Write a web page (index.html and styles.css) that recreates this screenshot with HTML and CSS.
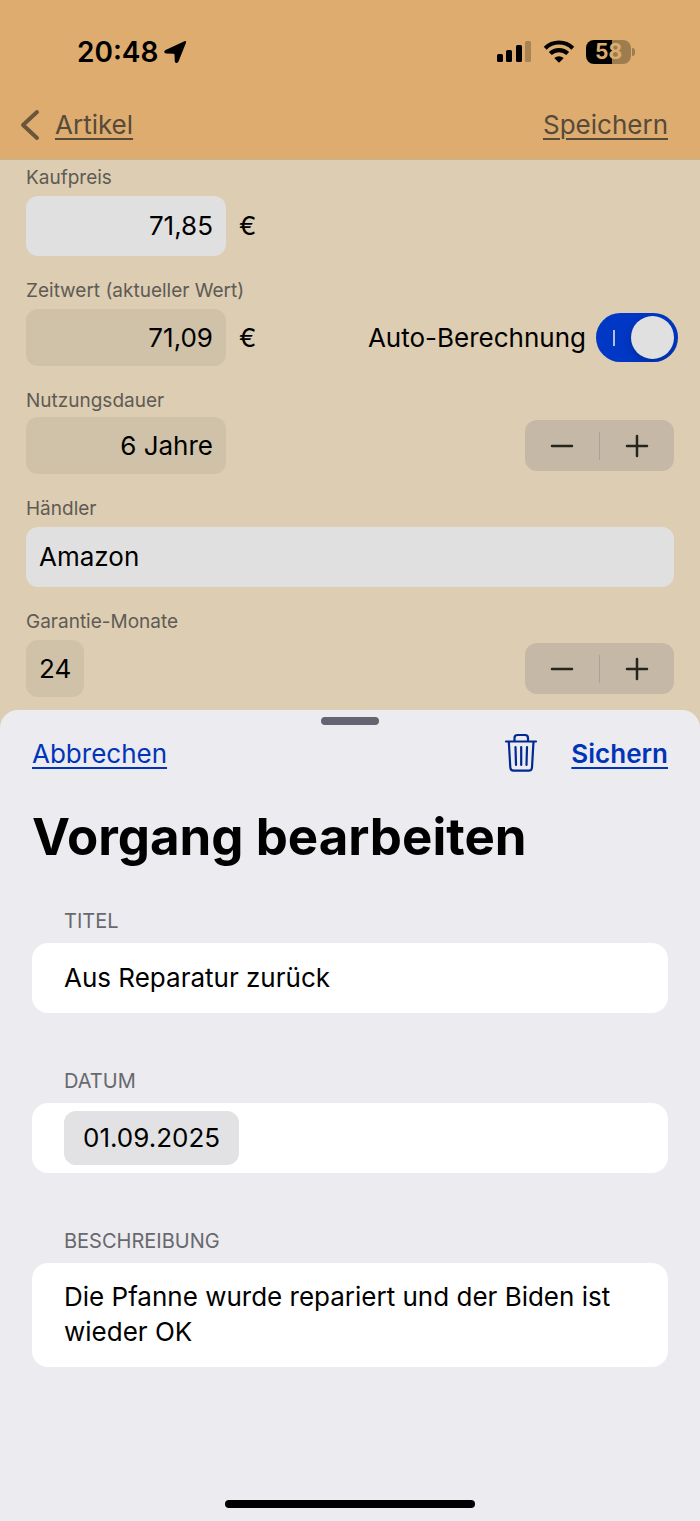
FILE: index.html
```html
<!DOCTYPE html>
<html lang="de">
<head>
<meta charset="utf-8">
<meta name="viewport" content="width=device-width, initial-scale=1">
<title>Vorgang bearbeiten</title>
<link rel="stylesheet" href="styles.css">
</head>
<body>
<div class="screen">
  <header class="header">
    <div class="status">
      <div class="status-time">
        <span>20:48</span>
        <svg width="24" height="24" viewBox="0 0 24 24" aria-hidden="true"><path d="M22 2.800 14.500 21.600Q13.800 23.200 12.400 23Q10.900 22.800 10.800 21.400L10.500 14.800Q10.500 13.800 9.500 13.800L2.200 13.500Q.5 13.400.2 12Q0 10.600 1.600 9.900L20.400 1.200Q22.800.5 22 2.800Z"/></svg>
      </div>
      <div class="status-icons">
        <svg width="36" height="24" viewBox="0 0 36 24" aria-hidden="true"><rect x="1" y="14" width="6" height="8" rx="1.500"/><rect x="10" y="10" width="6" height="12" rx="1.500"/><rect x="20" y="5" width="6" height="17" rx="1.500"/><rect x="29" y="1" width="6" height="21" rx="1.500" opacity=".24"/></svg>
        <svg width="32" height="24" viewBox="0 0 32 24" aria-hidden="true"><g fill="none" stroke="#000" stroke-width="4.200"><path d="M2.200 8.200a19.600 19.600 0 0 1 27.600 0"/><path d="M7.300 13.600a12.500 12.500 0 0 1 17.400 0"/></g><path d="M11.300 18a7 7 0 0 1 9.400 0L16.600 22.200q-.6.600-1.200 0Z"/></svg>
        <div class="battery"><span class="battery-level">58</span><span class="battery-cap"></span></div>
      </div>
    </div>
    <nav class="nav">
      <a class="back" href="#">
        <svg width="20" height="32" viewBox="0 0 20 32" fill="none" stroke="currentColor" stroke-width="4" stroke-linecap="round" stroke-linejoin="round" aria-hidden="true"><path d="M17 3 3 16l14 13"/></svg>
        <span class="link">Artikel</span>
      </a>
      <a class="link" href="#">Speichern</a>
    </nav>
  </header>

  <form class="article">
    <div class="field">
      <label class="label" for="price">Kaufpreis</label>
      <div class="row"><input class="box box-edit amount" id="price" type="text" value="71,85"><span class="unit">€</span></div>
    </div>
    <div class="field">
      <label class="label" for="value">Zeitwert (aktueller Wert)</label>
      <div class="row">
        <output class="box amount" id="value">71,09</output><span class="unit">€</span>
        <label class="auto">Auto-Berechnung <input class="switch" type="checkbox" role="switch" checked></label>
      </div>
    </div>
    <div class="field field-tight">
      <label class="label" for="years">Nutzungsdauer</label>
      <div class="row">
        <output class="box amount" id="years">6 Jahre</output>
        <div class="stepper">
          <button type="button" aria-label="Weniger Jahre"><svg width="24" height="24" viewBox="0 0 24 24"><path d="M2 12h20"/></svg></button>
          <button type="button" aria-label="Mehr Jahre"><svg width="24" height="24" viewBox="0 0 24 24"><path d="M2 12h20M12 2v20"/></svg></button>
        </div>
      </div>
    </div>
    <div class="field">
      <label class="label" for="dealer">Händler</label>
      <input class="box box-edit" id="dealer" type="text" value="Amazon">
    </div>
    <div class="field">
      <label class="label" for="months">Garantie-Monate</label>
      <div class="row">
        <output class="box" id="months">24</output>
        <div class="stepper">
          <button type="button" aria-label="Weniger Monate"><svg width="24" height="24" viewBox="0 0 24 24"><path d="M2 12h20"/></svg></button>
          <button type="button" aria-label="Mehr Monate"><svg width="24" height="24" viewBox="0 0 24 24"><path d="M2 12h20M12 2v20"/></svg></button>
        </div>
      </div>
    </div>
  </form>

  <form class="sheet">
    <div class="grabber"></div>
    <div class="sheet-nav">
      <button class="action" type="button">Abbrechen</button>
      <div class="sheet-actions">
        <button class="trash" type="button" aria-label="Löschen"><svg width="34" height="40" viewBox="0 0 34 40" fill="none" stroke="currentColor" stroke-width="2.200" stroke-linecap="round" stroke-linejoin="round"><path d="M2 8.500h30M10.500 8.500V5q0-3 3-3h7.500q3 0 3 3v3.500M4.800 8.500 6.300 34.500q.2 3.200 3.400 3.200h14.900q3.200 0 3.400-3.200L29.500 8.500M11.500 14l.5 18M17.200 14v18M23 14l-.5 18"/></svg></button>
        <button class="action action-strong" type="submit">Sichern</button>
      </div>
    </div>
    <h1 class="title">Vorgang bearbeiten</h1>
    <div class="groups">
      <div class="group">
        <label class="caption" for="title">TITEL</label>
        <input class="cell cell-text" id="title" type="text" value="Aus Reparatur zurück">
      </div>
      <div class="group">
        <label class="caption" for="date">DATUM</label>
        <div class="cell cell-date"><button class="date" id="date" type="button">01.09.2025</button></div>
      </div>
      <div class="group">
        <label class="caption" for="text">BESCHREIBUNG</label>
        <textarea class="cell cell-area" id="text" rows="2">Die Pfanne wurde repariert und der Biden ist wieder OK</textarea>
      </div>
    </div>
    <div class="home"></div>
  </form>
</div>
</body>
</html>
```

FILE: styles.css
```css
* { box-sizing: border-box; }

body {
  margin: 0;
  color: #000;
  font-family: Inter, "Liberation Sans", sans-serif;
  font-size: 26px;
  line-height: 32px;
}

input, button, textarea {
  margin: 0;
  border: 0;
  padding: 0;
  background: none;
  color: inherit;
  font: inherit;
}

svg { display: block; flex: none; }

.screen {
  display: flex;
  flex-direction: column;
  min-height: 100vh;
  background: #dccdb3;
}

.header {
  background: #ddac6e;
  border-bottom: 1px solid #c4b294;
  padding-top: 36px;
}

.status {
  display: flex;
  justify-content: space-between;
  align-items: center;
  padding: 0 65px 0 77px;
}

.status-time {
  display: flex;
  align-items: center;
  gap: 6px;
  font-size: 28px;
  font-weight: 600;
}

.status-icons { display: flex; align-items: center; gap: 11px; }

.battery { display: flex; align-items: center; gap: 1px; }

.battery-level {
  width: 45px;
  border-radius: 8px;
  background: linear-gradient(90deg, #000 58%, #9d7c50 58%);
  color: #ddac6e;
  font-size: 21px;
  font-weight: 700;
  line-height: 24px;
  text-align: center;
}

.battery-cap {
  width: 3px;
  height: 8px;
  border-radius: 0 3px 3px 0;
  background: #9d7c50;
}

.nav {
  display: flex;
  justify-content: space-between;
  align-items: center;
  padding: 41px 32px 18px 20px;
  color: #564a3b;
}

.back {
  display: flex;
  align-items: center;
  gap: 15px;
  color: #6b563c;
  text-decoration: none;
}

.link {
  color: #564a3b;
  text-decoration: underline;
  text-decoration-thickness: 2px;
  text-underline-offset: 4px;
}

.article {
  display: flex;
  flex-direction: column;
  gap: 23px;
  padding: 6px 26px 13px;
}

.field { display: flex; flex-direction: column; gap: 6px; }
.field-tight { gap: 4px; }

.label {
  color: #5f5b54;
  font-size: 19px;
  line-height: 24px;
}

.row { display: flex; align-items: center; }

.box {
  border-radius: 12px;
  padding: 13px 13px 12px;
  background: #cfc2a9;
}

.box-edit { padding: 14px 13px; background: #e0e0e0; }

.amount { width: 200px; text-align: right; }

.unit { margin-left: 13px; }

.auto {
  display: flex;
  align-items: center;
  gap: 10px;
  margin-left: auto;
  margin-right: -4px;
}

.switch {
  appearance: none;
  display: flex;
  align-items: center;
  justify-content: space-between;
  width: 82px;
  height: 49px;
  border-radius: 25px;
  padding: 0 4px 0 17px;
  background: #0037c4;
  overflow: hidden;
}

.switch::before {
  content: "";
  width: 2px;
  height: 16px;
  background: #b3c1e0;
}

.switch::after {
  content: "";
  width: 43px;
  height: 43px;
  border-radius: 50%;
  background: #e0e0e0;
  box-shadow: 0 3px 8px #0003;
}

.stepper {
  display: flex;
  align-items: center;
  width: 149px;
  height: 51px;
  margin-left: auto;
  border-radius: 12px;
  background: #c5b8a6;
}

.stepper button {
  display: flex;
  flex: 1;
  align-items: center;
  justify-content: center;
  height: 28px;
}

.stepper button + button { border-left: 1px solid #aca292; }

.stepper path {
  fill: none;
  stroke: #26241f;
  stroke-width: 2.500;
  stroke-linecap: round;
}

.sheet {
  display: flex;
  flex: 1;
  flex-direction: column;
  border-radius: 18px 18px 0 0;
  padding: 7px 32px 13px;
  background: #ebebf0;
}

.grabber {
  align-self: center;
  width: 58px;
  height: 8px;
  border-radius: 4px;
  background: #646470;
}

.sheet-nav {
  display: flex;
  justify-content: space-between;
  align-items: center;
  padding-top: 8px;
}

.sheet-actions { display: flex; align-items: center; gap: 33px; }

.action {
  padding-top: 2px;
  color: #0035b8;
  text-decoration: underline;
  text-decoration-thickness: 2px;
  text-underline-offset: 4px;
}

.action-strong { font-weight: 600; }

.trash { color: #002a92; }

.title {
  margin: 32px 0 0;
  font-size: 51px;
  font-weight: 700;
  line-height: 64px;
}

.groups {
  display: flex;
  flex-direction: column;
  gap: 56px;
  margin-top: 40px;
}

.group { display: flex; flex-direction: column; gap: 10px; }

.caption {
  padding-left: 32px;
  color: #68686d;
  font-size: 20px;
  line-height: 24px;
}

.cell {
  width: 100%;
  border-radius: 16px;
  background: #fff;
}

.cell-text { padding: 19px 32px; }
.cell-date { padding: 8px 32px; }

.cell-area {
  display: block;
  padding: 16px 32px 18px;
  line-height: 35px;
  resize: none;
  overflow: hidden;
}

.date {
  display: block;
  border-radius: 12px;
  padding: 11px 19px;
  background: #e2e2e4;
}

.home {
  align-self: center;
  width: 250px;
  height: 8px;
  margin-top: auto;
  border-radius: 4px;
  background: #000;
}
```
